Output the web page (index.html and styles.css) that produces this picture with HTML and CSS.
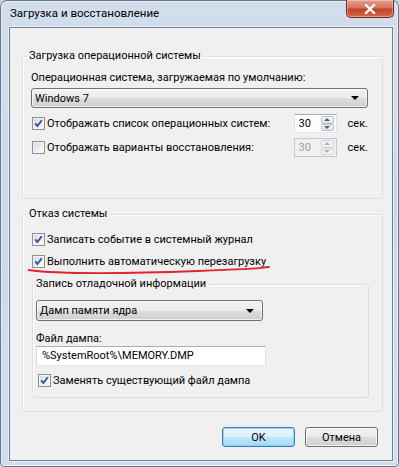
FILE: index.html
```html
<!DOCTYPE html>
<html lang="ru">

<head>
    <meta charset="UTF-8">
    <meta name="viewport" content="width=device-width, initial-scale=1.0">
    <link rel="stylesheet" href="styles.css">
</head>

<body>
    <div class="window">
        <div class="titlebar">
            <span class="title">Загрузка и восстановление</span>
            <div class="close-btn">
                <svg width="14" height="10" viewBox="0 0 14 10">
                    <path d="M3 1 L11 9 M11 1 L3 9" stroke="#fff" stroke-width="2.4" stroke-linecap="square" />
                </svg>
            </div>
        </div>

        <div class="client">
            <!-- Boot section -->
            <fieldset class="group group-boot">
                <legend>Загрузка операционной системы</legend>
                <div class="label-line">Операционная система, загружаемая по умолчанию:</div>
                <div class="combo combo-os">
                    <span class="combo-text">Windows 7</span>
                    <span class="combo-arrow"></span>
                </div>

                <div class="check-row spin-row">
                    <span class="checkbox checked">
                        <svg width="11" height="11" viewBox="0 0 11 11">
                            <path d="M2.2 5.4 L4.4 8 L8.8 2.2" fill="none" stroke="#34529a" stroke-width="1.9" />
                        </svg>
                    </span>
                    <span class="check-label">Отображать список операционных систем:</span>
                    <div class="spin">
                        <span class="spin-value">30</span>
                        <div class="spin-btns">
                            <div class="spin-btn"><span class="arrow-up"></span></div>
                            <div class="spin-btn"><span class="arrow-down"></span></div>
                        </div>
                    </div>
                    <span class="unit">сек.</span>
                </div>

                <div class="check-row spin-row second">
                    <span class="checkbox"></span>
                    <span class="check-label">Отображать варианты восстановления:</span>
                    <div class="spin disabled">
                        <span class="spin-value">30</span>
                        <div class="spin-btns">
                            <div class="spin-btn"><span class="arrow-up"></span></div>
                            <div class="spin-btn"><span class="arrow-down"></span></div>
                        </div>
                    </div>
                    <span class="unit">сек.</span>
                </div>
            </fieldset>

            <!-- Failure section -->
            <fieldset class="group group-failure">
                <legend>Отказ системы</legend>
                <div class="check-row">
                    <span class="checkbox checked">
                        <svg width="11" height="11" viewBox="0 0 11 11">
                            <path d="M2.2 5.4 L4.4 8 L8.8 2.2" fill="none" stroke="#34529a" stroke-width="1.9" />
                        </svg>
                    </span>
                    <span class="check-label">Записать событие в системный журнал</span>
                </div>
                <div class="check-row marked">
                    <span class="checkbox checked">
                        <svg width="11" height="11" viewBox="0 0 11 11">
                            <path d="M2.2 5.4 L4.4 8 L8.8 2.2" fill="none" stroke="#34529a" stroke-width="1.9" />
                        </svg>
                    </span>
                    <span class="check-label">Выполнить автоматическую перезагрузку</span>
                    <svg class="scribble" width="246" height="10" viewBox="0 0 246 10">
                        <path d="M0 4 C30 8, 90 8, 170 5 S 228 2, 241 1" fill="none" stroke="#e2232a" stroke-width="1.8" stroke-linecap="round" />
                    </svg>
                </div>

                <fieldset class="group group-debug">
                    <legend>Запись отладочной информации</legend>
                    <div class="combo combo-dump">
                        <span class="combo-text">Дамп памяти ядра</span>
                        <span class="combo-arrow"></span>
                    </div>
                    <div class="label-line file-label">Файл дампа:</div>
                    <div class="textbox">%SystemRoot%\MEMORY.DMP</div>
                    <div class="check-row overwrite">
                        <span class="checkbox checked">
                            <svg width="11" height="11" viewBox="0 0 11 11">
                                <path d="M2.2 5.4 L4.4 8 L8.8 2.2" fill="none" stroke="#34529a" stroke-width="1.9" />
                            </svg>
                        </span>
                        <span class="check-label">Заменять существующий файл дампа</span>
                    </div>
                </fieldset>
            </fieldset>

            <div class="buttons">
                <button class="btn btn-default">OK</button>
                <button class="btn">Отмена</button>
            </div>
        </div>
    </div>
</body>

</html>
```

FILE: styles.css
```css
* {
    box-sizing: border-box;
}

body {
    margin: 0;
    font-family: Roboto, "Noto Sans", sans-serif;
    font-size: 11px;
    color: #000;
    background: #c6d6e9;
}

/* Window frame */
.window {
    width: 399px;
    height: 467px;
    display: flex;
    flex-direction: column;
    background: linear-gradient(180deg, #d3deeb 0%, #c9d9ec 40%, #cfdff1 100%);
    border-radius: 7px 7px 5px 5px;
    box-shadow: inset 0 0 0 1px #66768a, inset 0 0 0 2px rgba(255, 255, 255, 0.55);
}

.titlebar {
    height: 27px;
    display: flex;
    align-items: flex-start;
    padding-left: 10px;
}

.title {
    margin-top: 5px;
    line-height: 16px;
    font-size: 11.5px;
}

.close-btn {
    margin-left: auto;
    margin-right: 5px;
    width: 48px;
    height: 18px;
    display: flex;
    align-items: center;
    justify-content: center;
    border: 1px solid #6b2a22;
    border-top: none;
    border-radius: 0 0 5px 5px;
    background: linear-gradient(180deg, #e4a08f 0%, #d6705c 45%, #c2412b 55%, #d46a4c 100%);
    box-shadow: inset 0 0 0 1px rgba(255, 255, 255, 0.35);
}

/* Client area */
.client {
    flex: 1;
    margin: 0 6px 6px 9px;
    background: #f0f0f0;
    border: 1px solid #6e7e92;
    box-shadow: 0 0 0 1px rgba(255, 255, 255, 0.6);
    display: flex;
    flex-direction: column;
}

/* Group boxes */
.group {
    margin: 0;
    border: 1px solid #d5dfe5;
    border-radius: 3px;
    box-shadow: inset 1px 1px 0 #fff;
    min-width: 0;
}

.group legend {
    padding: 0 2px;
    line-height: 16px;
}

.group-boot {
    margin: 20px 9px 0 12px;
    padding: 0 14px 41px 8px;
}

.group-boot legend,
.group-failure legend {
    margin-left: -4px;
}

.group-failure {
    margin: 7px 9px 0 12px;
    padding: 10px 14px 13px 8px;
}

.group-debug {
    margin: 7px -1px 0 1px;
    padding: 0 0 9px 3px;
}

.group-debug legend {
    margin-left: -2px;
}

.label-line {
    line-height: 15px;
    margin-top: 6px;
}

/* Combo boxes */
.combo {
    height: 20px;
    display: flex;
    align-items: center;
    border: 1px solid #707070;
    border-radius: 3px;
    background: linear-gradient(180deg, #f2f2f2 0%, #ebebeb 50%, #dddddd 51%, #cfcfcf 100%);
    box-shadow: inset 0 0 0 1px rgba(255, 255, 255, 0.7);
    padding: 0 8px 0 3px;
}

.combo-os {
    margin-top: 3px;
}

.combo-dump {
    width: 227px;
    height: 21px;
    margin-top: 8px;
}

.combo-text {
    flex: 1;
}

.combo-arrow {
    width: 0;
    height: 0;
    border-left: 4px solid transparent;
    border-right: 4px solid transparent;
    border-top: 4px solid #000;
}

/* Check rows */
.check-row {
    display: flex;
    align-items: center;
    height: 15px;
    line-height: 15px;
}

.check-row.marked {
    margin-top: 7px;
    position: relative;
}

.check-row.overwrite {
    margin-top: 7px;
    margin-left: 1px;
}

.spin-row {
    height: 19px;
    margin-top: 6px;
}

.spin-row.second {
    margin-top: 5px;
}

.checkbox {
    width: 13px;
    height: 13px;
    margin-left: 1px;
    margin-right: 2px;
    flex-shrink: 0;
    display: flex;
    align-items: center;
    justify-content: center;
    border: 1px solid #8e8f8f;
    background: linear-gradient(135deg, #d3d7de 0%, #eef0f3 60%, #fbfbfb 100%);
    box-shadow: inset 0 0 0 1px #f6f6f6;
}

.check-label {
    white-space: nowrap;
}

.scribble {
    position: absolute;
    left: -3px;
    top: 12px;
}

/* Spin boxes */
.spin {
    margin-left: auto;
    width: 43px;
    height: 19px;
    display: flex;
    align-items: stretch;
    background: #fff;
    border: 1px solid #abadb3;
    border-left-color: #dbdfe6;
    border-right-color: #dbdfe6;
    border-bottom-color: #e3e9ef;
}

.spin-value {
    flex: 1;
    padding-left: 4px;
    line-height: 17px;
}

.spin-btns {
    width: 13px;
    margin: 1px 2px 1px 0;
    display: flex;
    flex-direction: column;
}

.spin-btn {
    flex: 1;
    display: flex;
    align-items: center;
    justify-content: center;
    border: 1px solid #b8c0ca;
    border-radius: 2px;
    background: linear-gradient(180deg, #f5f7f9, #dfe4ea);
}

.arrow-up {
    border-left: 3px solid transparent;
    border-right: 3px solid transparent;
    border-bottom: 3px solid #4c5f7e;
}

.arrow-down {
    border-left: 3px solid transparent;
    border-right: 3px solid transparent;
    border-top: 3px solid #4c5f7e;
}

.spin.disabled {
    background: #f0f0f0;
    border-color: #c4c7cb;
    color: #a0a0a0;
}

.spin.disabled .spin-btn {
    border-color: #d3d6da;
    background: #f2f2f2;
}

.spin.disabled .arrow-up {
    border-bottom-color: #b4b4b4;
}

.spin.disabled .arrow-down {
    border-top-color: #b4b4b4;
}

.unit {
    margin-left: 11px;
    margin-right: 0;
}

/* Dump file */
.file-label {
    margin-top: 11px;
    line-height: 14px;
}

.textbox {
    width: 230px;
    height: 20px;
    line-height: 18px;
    padding-left: 5px;
    background: #fff;
    border: 1px solid #abadb3;
    border-left-color: #dbdfe6;
    border-right-color: #dbdfe6;
    border-bottom-color: #e3e9ef;
}

/* Dialog buttons */
.buttons {
    display: flex;
    justify-content: flex-end;
    gap: 10px;
    margin-top: 15px;
    padding-right: 14px;
}

.btn {
    width: 73px;
    height: 20px;
    padding: 0;
    font: inherit;
    color: #000;
    border: 1px solid #707070;
    border-radius: 3px;
    background: linear-gradient(180deg, #f2f2f2 0%, #ebebeb 50%, #dddddd 51%, #cfcfcf 100%);
    box-shadow: inset 0 0 0 1px rgba(255, 255, 255, 0.7);
}

.btn-default {
    border-color: #3c7fb1;
    background: linear-gradient(180deg, #eaf6fd 0%, #d9f0fc 50%, #bee6fd 51%, #a7d9f5 100%);
    box-shadow: inset 0 0 0 1px rgba(120, 210, 250, 0.8);
}
```
